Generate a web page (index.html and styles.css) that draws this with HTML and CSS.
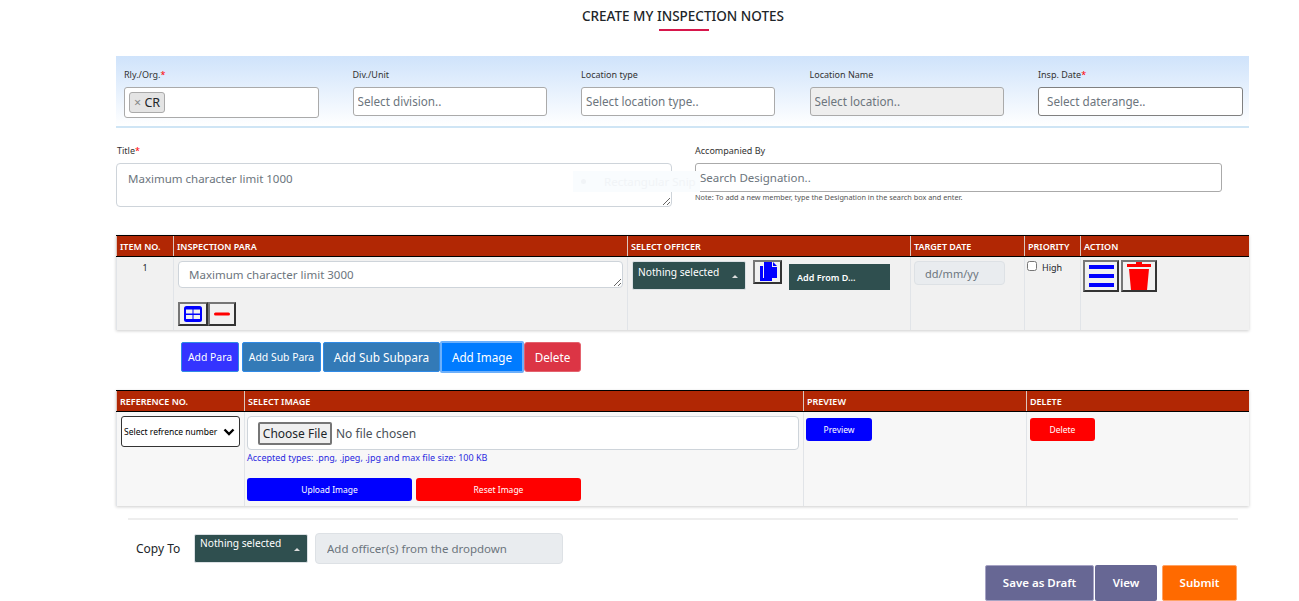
FILE: index.html
```html
<!DOCTYPE html>
<html lang="en">
  <head>
    <meta charset="UTF-8" />
    <meta name="viewport" content="width=device-width, initial-scale=1.0" />
    <title>Create My Inspection Notes</title>
    <link rel="stylesheet" href="styles.css">
  </head>

  <body>
    <div class="page">
      <h2 class="page-title">CREATE MY INSPECTION NOTES</h2>

      <div class="filter-band">
        <div class="field">
          <label>Rly./Org.<span class="req">*</span></label>
          <div class="tag-input"><span class="tag"><span class="tag-x">×</span> CR</span></div>
        </div>
        <div class="field">
          <label>Div./Unit</label>
          <input type="text" class="band-input" placeholder="Select division.." />
        </div>
        <div class="field">
          <label>Location type</label>
          <input type="text" class="band-input" placeholder="Select location type.." />
        </div>
        <div class="field">
          <label>Location Name</label>
          <input type="text" class="band-input disabled" placeholder="Select location.." disabled />
        </div>
        <div class="field">
          <label>Insp. Date<span class="req">*</span></label>
          <input type="text" class="band-input date-input" placeholder="Select daterange.." />
        </div>
      </div>

      <div class="title-row">
        <div class="title-col">
          <label>Title<span class="req">*</span></label>
          <textarea class="title-area" placeholder="Maximum character limit 1000"></textarea>
          <div class="ghost-snip"><span class="ghost-dot"></span>Rectangular Snip</div>
        </div>
        <div class="accomp-col">
          <label>Accompanied By</label>
          <input type="text" class="accomp-input" placeholder="Search Designation.." />
          <p class="note">Note: To add a new member, type the Designation in the search box and enter.</p>
        </div>
      </div>

      <table class="grid para-grid">
        <colgroup>
          <col class="c-item" /><col class="c-para" /><col class="c-officer" />
          <col class="c-date" /><col class="c-priority" /><col />
        </colgroup>
        <thead>
          <tr>
            <th>ITEM NO.</th>
            <th>INSPECTION PARA</th>
            <th>SELECT OFFICER</th>
            <th>TARGET DATE</th>
            <th>PRIORITY</th>
            <th>ACTION</th>
          </tr>
        </thead>
        <tbody>
          <tr>
            <td class="item-no">1</td>
            <td>
              <textarea class="para-area" placeholder="Maximum character limit 3000"></textarea>
              <div class="icon-row">
                <button class="icon-btn small-icon" title="Table">
                  <svg width="18" height="16" viewBox="0 0 18 16">
                    <rect width="18" height="16" rx="2.5" fill="#0000ff" />
                    <rect x="2" y="3.5" width="6.5" height="4" fill="#f0f0f0" />
                    <rect x="9.5" y="3.5" width="6.5" height="4" fill="#f0f0f0" />
                    <rect x="2" y="9" width="6.5" height="4" fill="#f0f0f0" />
                    <rect x="9.5" y="9" width="6.5" height="4" fill="#f0f0f0" />
                  </svg>
                </button>
                <button class="icon-btn small-icon" title="Remove">
                  <svg width="18" height="16" viewBox="0 0 18 16">
                    <rect x="1" y="6.5" width="16" height="3" rx="1.5" fill="#ff0000" />
                  </svg>
                </button>
              </div>
            </td>
            <td>
              <div class="officer-cell">
                <div class="picker">Nothing selected<span class="caret"></span></div>
                <button class="icon-btn copy-btn" title="Copy">
                  <svg width="18" height="20" viewBox="0 0 18 20">
                    <path d="M1 4h3v12h9v3H1z" fill="#0000ff" />
                    <path d="M5 0h8v5h5v11H5z" fill="#0000ff" />
                    <path d="M14 0l4 4h-4z" fill="#0000ff" />
                  </svg>
                </button>
                <button class="add-from">Add From D...</button>
              </div>
            </td>
            <td><input type="text" class="date-cell" placeholder="dd/mm/yy" disabled /></td>
            <td>
              <label class="high"><input type="checkbox" />High</label>
            </td>
            <td>
              <div class="action-cell">
                <button class="icon-btn action-btn" title="Menu">
                  <svg width="25" height="24" viewBox="0 0 25 24">
                    <rect y="1" width="25" height="4" fill="#0000ff" />
                    <rect y="10" width="25" height="4" fill="#0000ff" />
                    <rect y="19" width="25" height="4" fill="#0000ff" />
                  </svg>
                </button>
                <button class="icon-btn action-btn" title="Delete">
                  <svg width="24" height="28" viewBox="0 0 24 28">
                    <path d="M9 0h6v2h9v3H0V2h9z" fill="#ff0000" />
                    <path d="M2 7h20l-2 21H4z" fill="#ff0000" />
                  </svg>
                </button>
              </div>
            </td>
          </tr>
        </tbody>
      </table>

      <div class="para-actions">
        <button class="btn btn-para">Add Para</button>
        <button class="btn btn-sub">Add Sub Para</button>
        <button class="btn btn-subsub">Add Sub Subpara</button>
        <button class="btn btn-image">Add Image</button>
        <button class="btn btn-delete">Delete</button>
      </div>

      <table class="grid image-grid">
        <colgroup>
          <col class="c-ref" /><col class="c-select" /><col class="c-preview" /><col />
        </colgroup>
        <thead>
          <tr>
            <th>REFERENCE NO.</th>
            <th>SELECT IMAGE</th>
            <th>PREVIEW</th>
            <th>DELETE</th>
          </tr>
        </thead>
        <tbody>
          <tr>
            <td>
              <select class="ref-select">
                <option>Select refrence number</option>
              </select>
            </td>
            <td>
              <div class="file-box"><input type="file" class="file-input" /></div>
              <p class="accepted">Accepted types: .png, .jpeg, .jpg and max file size: 100 KB</p>
              <div class="upload-row">
                <button class="mini-btn blue wide">Upload Image</button>
                <button class="mini-btn red wide">Reset Image</button>
              </div>
            </td>
            <td><button class="mini-btn blue preview">Preview</button></td>
            <td><button class="mini-btn red preview">Delete</button></td>
          </tr>
        </tbody>
      </table>

      <hr class="divider" />

      <div class="copy-row">
        <span class="copy-label">Copy To</span>
        <div class="picker copy-picker">Nothing selected<span class="caret"></span></div>
        <input type="text" class="copy-input" placeholder="Add officer(s) from the dropdown" disabled />
      </div>

      <div class="submit-row">
        <button class="big-btn draft">Save as Draft</button>
        <button class="big-btn view">View</button>
        <button class="big-btn submit">Submit</button>
      </div>
    </div>
  </body>
</html>
```

FILE: styles.css
```css
* {
  margin: 0;
  padding: 0;
  box-sizing: border-box;
}

body {
  font-family: "Noto Sans", "Open Sans", sans-serif;
  background-color: #ffffff;
  color: #212529;
  overflow: hidden;
}

.page {
  width: 1133px;
  margin-left: 116px;
}

.page-title {
  font-size: 13.5px;
  line-height: 18px;
  font-weight: 500;
  text-align: center;
  color: #212529;
  padding-top: 7px;
  margin-left: 1px;
  height: 32px;
  position: relative;
}

.page-title::after {
  content: "";
  position: absolute;
  left: 542px;
  top: 29px;
  width: 50px;
  height: 2px;
  background-color: #d7164b;
}

label {
  display: block;
  font-size: 9px;
  line-height: 12px;
  color: #333333;
}

.req {
  color: #ff0000;
}

input,
textarea,
select,
button {
  font-family: inherit;
}

input::placeholder,
textarea::placeholder {
  color: #6c757d;
  opacity: 1;
}

.filter-band {
  display: grid;
  grid-template-columns: repeat(5, 228.5px);
  margin-top: 24px;
  height: 72px;
  padding: 13px 0 0 8px;
  background: linear-gradient(#cfe3fb, #ffffff);
  border-bottom: 2px solid #cfe5f5;
}

.field label {
  margin-bottom: 6px;
}

.tag-input {
  display: flex;
  align-items: flex-start;
  width: 195px;
  height: 31px;
  background-color: #ffffff;
  border: 1px solid #aaaaaa;
  border-radius: 3px;
  padding: 4px;
}

.tag {
  height: 21px;
  line-height: 19px;
  font-size: 12.5px;
  padding: 0 4px;
  background-color: #e4e4e4;
  border: 1px solid #aaaaaa;
  border-radius: 3px;
}

.tag-x {
  color: #888888;
}

.band-input {
  display: block;
  width: 194px;
  height: 29px;
  font-size: 11.7px;
  padding: 0 4px 1px;
  border: 1px solid #aaaaaa;
  border-radius: 3px;
  background-color: #ffffff;
}

.band-input.disabled {
  background-color: #eeeeee;
}

.date-input {
  width: 205px;
  padding-left: 8px;
  border-color: #808080;
}

.title-row {
  display: flex;
  padding-top: 17px;
  height: 107px;
}

.title-col {
  position: relative;
  width: 579px;
}

.title-col label {
  margin: 0 0 6px 1px;
}

.title-area {
  display: block;
  width: 556px;
  height: 44px;
  font-size: 11.5px;
  padding: 7px 11px;
  border: 1px solid #ced4da;
  border-radius: 4px;
}

.ghost-snip {
  position: absolute;
  left: 457px;
  top: 26px;
  width: 127px;
  height: 21px;
  display: flex;
  align-items: center;
  gap: 18px;
  padding-left: 8px;
  font-size: 11.5px;
  white-space: nowrap;
  color: #f1f4f7;
  background-color: #f9fcfe;
}

.ghost-dot {
  width: 5px;
  height: 5px;
  border-radius: 50%;
  background-color: #f1f4f7;
}

.accomp-col label {
  margin-bottom: 6px;
}

.accomp-input {
  display: block;
  width: 527px;
  height: 29px;
  font-size: 11.5px;
  padding: 0 4px;
  border: 1px solid #aaaaaa;
  border-radius: 3px;
}

.note {
  font-size: 7.3px;
  line-height: 11px;
  color: #555555;
}

.grid {
  width: 1133px;
  table-layout: fixed;
  border-collapse: collapse;
  box-shadow: 0 1px 3px rgba(0, 0, 0, 0.2);
}

.grid th {
  height: 21px;
  background-color: #b12704;
  color: #ffffff;
  font-size: 9px;
  font-weight: 600;
  text-align: left;
  padding: 0 3px;
  border-top: 1px solid #000000;
  border-bottom: 1px solid #000000;
  border-left: 1px solid #dcc5bd;
  white-space: nowrap;
}

.grid td {
  vertical-align: top;
  padding: 4px;
  border-left: 1px solid #e1e4e8;
}

.para-grid td {
  height: 73px;
  background-color: #f1f1f1;
}

.c-item { width: 57px; }
.c-para { width: 454px; }
.c-officer { width: 283px; }
.c-date { width: 114px; }
.c-priority { width: 56px; }

.item-no {
  text-align: center;
  font-size: 9px;
  line-height: 13px;
}

.para-area {
  display: block;
  width: 445px;
  height: 27px;
  font-size: 11.5px;
  padding: 5px 10px 3px;
  border: 1px solid #ced4da;
  border-radius: 4px;
}

.icon-btn {
  display: flex;
  align-items: center;
  justify-content: center;
  background-color: #f1f1f1;
  border-style: solid;
  border-width: 2px;
  border-color: #767676 #333333 #333333 #767676;
}

.icon-row {
  display: flex;
  margin-top: 14px;
}

.small-icon {
  width: 30px;
  height: 24px;
}

.small-icon + .small-icon {
  width: 28px;
}

.officer-cell {
  display: flex;
  align-items: flex-start;
}

.picker {
  position: relative;
  width: 114px;
  height: 29px;
  background-color: #2f4f4f;
  color: #ffffff;
  font-size: 10.2px;
  line-height: 15px;
  padding: 3px 5px;
  border: 1px solid #dbe0e4;
  border-radius: 2px;
}

.caret {
  position: absolute;
  right: 7px;
  top: 13px;
  border-left: 3px solid transparent;
  border-right: 3px solid transparent;
  border-bottom: 3px solid #dddddd;
}

.copy-btn {
  width: 29px;
  height: 24px;
  margin: -1px 0 0 7px;
}

.add-from {
  width: 101px;
  height: 26px;
  margin: 3px 0 0 7px;
  background-color: #2f4f4f;
  color: #ffffff;
  font-size: 9px;
  font-weight: 600;
  text-align: left;
  padding-left: 8px;
  border: 0;
}

.date-cell {
  display: block;
  width: 91px;
  height: 24px;
  margin-left: -1px;
  font-size: 11px;
  padding: 0 10px;
  background-color: #e9ecef;
  border: 1px solid #dde1e5;
  border-radius: 4px;
}

.high {
  display: flex;
  align-items: flex-start;
  gap: 5px;
  font-size: 9px;
  line-height: 14px;
  color: #212529;
  margin-left: -2px;
}

.high input {
  width: 10px;
  height: 10px;
  margin-top: 0;
}

.action-cell {
  display: flex;
  gap: 2px;
  margin: -1px 0 0 -2px;
}

.action-btn {
  width: 36px;
  height: 32px;
}

.para-actions {
  display: flex;
  align-items: center;
  height: 30px;
  margin: 12px 0 18px 65px;
}

.btn {
  color: #ffffff;
  font-size: 10.4px;
  height: 30px;
  border-radius: 2px;
  border: 1px solid #2f8ae6;
}

.btn-para {
  width: 58px;
  background-color: #3434ff;
  margin-right: 3px;
}

.btn-sub {
  width: 79px;
  background-color: #337ab7;
  margin-right: 2px;
}

.btn-subsub {
  width: 117px;
  font-size: 11.8px;
  background-color: #337ab7;
}

.btn-image {
  width: 84px;
  height: 32px;
  font-size: 11.7px;
  background-color: #007bff;
  border: 2px solid #6db0fb;
}

.btn-delete {
  width: 57px;
  font-size: 11.7px;
  background-color: #dc3545;
  border-color: #e4626e;
  border-radius: 3px;
}

.image-grid td {
  height: 94px;
  background-color: #f7f7f7;
}

.c-ref { width: 128px; }
.c-select { width: 559px; }
.c-preview { width: 223px; }

.ref-select {
  display: block;
  width: 119px;
  height: 31px;
  font-size: 8.5px;
  padding-left: 2px;
  appearance: none;
  background: #ffffff url("data:image/svg+xml,%3Csvg xmlns='http://www.w3.org/2000/svg' width='12' height='8' viewBox='0 0 12 8'%3E%3Cpath d='M1.5 1.5L6 6l4.500-4.500' fill='none' stroke='%23000' stroke-width='2.4'/%3E%3C/svg%3E") no-repeat right 4px center;
  border: 1px solid #333333;
  border-radius: 3px;
  color: #000000;
}

.file-box {
  width: 552px;
  height: 34px;
  margin-left: -2px;
  padding: 4px 10px;
  background-color: #ffffff;
  border: 1px solid #ced4da;
  border-radius: 4px;
  display: flex;
  align-items: center;
}

.file-input {
  font-size: 12px;
  color: #495057;
}

.file-input::file-selector-button {
  width: 74px;
  height: 23px;
  margin-right: 4px;
  padding: 0;
  font-size: 12px;
  font-family: inherit;
  color: #212529;
  background-color: #efefef;
  border: 2px solid #767676;
  border-radius: 2px;
}

.accepted {
  font-size: 9px;
  line-height: 12px;
  margin: 2px 0 0 -2px;
  color: #2a2ae0;
}

.upload-row {
  display: flex;
  gap: 4px;
  margin: 14px 0 0 -2px;
}

.mini-btn {
  color: #ffffff;
  font-size: 8.5px;
  border: 0;
  border-radius: 3px;
  height: 23px;
}

.mini-btn.blue {
  background-color: #0000ff;
}

.mini-btn.red {
  background-color: #ff0000;
}

.mini-btn.wide {
  width: 165px;
}

.mini-btn.preview {
  width: 66px;
  margin-left: -2px;
}

.image-grid td:last-child .preview {
  width: 65px;
  margin-left: -1px;
}

.divider {
  width: 1110px;
  margin: 12px 0 0 12px;
  border: 0;
  border-top: 2px solid #eeeeee;
}

.copy-row {
  display: flex;
  align-items: center;
  margin: 13px 0 0 20px;
  height: 31px;
}

.copy-label {
  width: 58px;
  font-size: 12px;
  color: #212529;
}

.copy-picker {
  width: 114px;
  padding-top: 1px;
}

.copy-input {
  width: 248px;
  height: 31px;
  margin-left: 7px;
  font-size: 11.5px;
  padding: 0 11px;
  background-color: #e9ecef;
  border: 1px solid #dde1e5;
  border-radius: 4px;
}

.submit-row {
  display: flex;
  margin: 1px 0 0 869px;
}

.big-btn {
  height: 36px;
  color: #ffffff;
  font-size: 11.5px;
  font-weight: 600;
  border: 1px solid #a6a3c4;
  border-radius: 2px;
}

.draft {
  width: 109px;
  background-color: #676794;
  margin-right: 1px;
}

.view {
  width: 62px;
  background-color: #676794;
  margin-right: 5px;
  border: 0;
}

.submit {
  width: 75px;
  background-color: #ff6a00;
  border-color: #ffa366;
}
```
